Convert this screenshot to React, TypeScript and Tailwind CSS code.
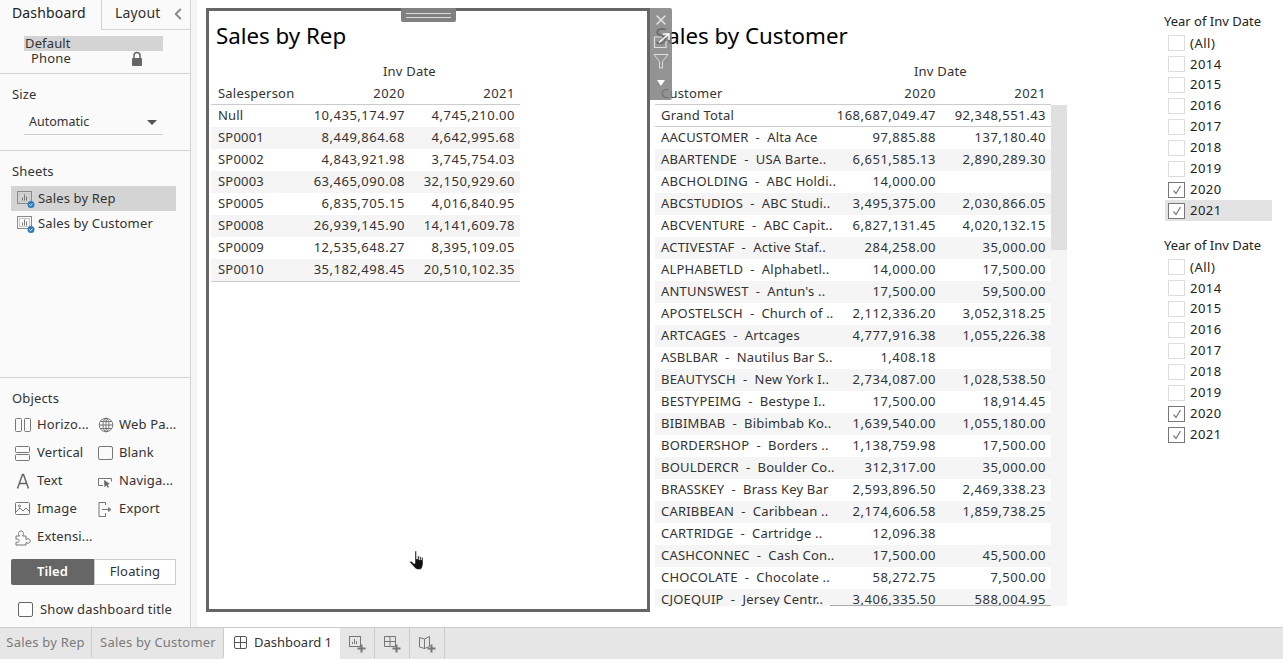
import { ChevronLeft, X } from "lucide-react";

const repRows = [
    ["Null", "10,435,174.97", "4,745,210.00"],
    ["SP0001", "8,449,864.68", "4,642,995.68"],
    ["SP0002", "4,843,921.98", "3,745,754.03"],
    ["SP0003", "63,465,090.08", "32,150,929.60"],
    ["SP0005", "6,835,705.15", "4,016,840.95"],
    ["SP0008", "26,939,145.90", "14,141,609.78"],
    ["SP0009", "12,535,648.27", "8,395,109.05"],
    ["SP0010", "35,182,498.45", "20,510,102.35"],
];

const customerRows = [
    ["AACUSTOMER  -  Alta Ace", "97,885.88", "137,180.40"],
    ["ABARTENDE  -  USA Barte..", "6,651,585.13", "2,890,289.30"],
    ["ABCHOLDING  -  ABC Holdi..", "14,000.00", ""],
    ["ABCSTUDIOS  -  ABC Studi..", "3,495,375.00", "2,030,866.05"],
    ["ABCVENTURE  -  ABC Capit..", "6,827,131.45", "4,020,132.15"],
    ["ACTIVESTAF  -  Active Staf..", "284,258.00", "35,000.00"],
    ["ALPHABETLD  -  Alphabetl..", "14,000.00", "17,500.00"],
    ["ANTUNSWEST  -  Antun's ..", "17,500.00", "59,500.00"],
    ["APOSTELSCH  -  Church of ..", "2,112,336.20", "3,052,318.25"],
    ["ARTCAGES  -  Artcages", "4,777,916.38", "1,055,226.38"],
    ["ASBLBAR  -  Nautilus Bar S..", "1,408.18", ""],
    ["BEAUTYSCH  -  New York I..", "2,734,087.00", "1,028,538.50"],
    ["BESTYPEIMG  -  Bestype I..", "17,500.00", "18,914.45"],
    ["BIBIMBAB  -  Bibimbab Ko..", "1,639,540.00", "1,055,180.00"],
    ["BORDERSHOP  -  Borders ..", "1,138,759.98", "17,500.00"],
    ["BOULDERCR  -  Boulder Co..", "312,317.00", "35,000.00"],
    ["BRASSKEY  -  Brass Key Bar", "2,593,896.50", "2,469,338.23"],
    ["CARIBBEAN  -  Caribbean ..", "2,174,606.58", "1,859,738.25"],
    ["CARTRIDGE  -  Cartridge ..", "12,096.38", ""],
    ["CASHCONNEC  -  Cash Con..", "17,500.00", "45,500.00"],
    ["CHOCOLATE  -  Chocolate ..", "58,272.75", "7,500.00"],
    ["CJOEQUIP  -  Jersey Centr..", "3,406,335.50", "588,004.95"],
];

const years = [
    { label: "(All)", checked: false },
    { label: "2014", checked: false },
    { label: "2015", checked: false },
    { label: "2016", checked: false },
    { label: "2017", checked: false },
    { label: "2018", checked: false },
    { label: "2019", checked: false },
    { label: "2020", checked: true },
    { label: "2021", checked: true },
];

const SheetIcon = () => (
    <svg width="18" height="18" viewBox="0 0 18 18" className="shrink-0">
        <rect x="0.5" y="1.5" width="14" height="12" fill="none" stroke="#8a8a8a" strokeWidth="1" />
        <rect x="2.5" y="3.5" width="10" height="8" fill="none" stroke="#c8c8c8" strokeWidth="1" />
        <path d="M5.5 10.500V7.500M7.500 10.500V4.500M9.500 10.500V6.500" stroke="#777" strokeWidth="1" />
        <circle cx="14" cy="14.500" r="3.500" fill="#2f7bbd" />
        <path d="M12.300 14.500l1.200 1.200 2-2" stroke="#fff" strokeWidth="1" fill="none" />
    </svg>
);

const LockIcon = () => (
    <svg width="12" height="16" viewBox="0 0 12 16" className="shrink-0">
        <path d="M3 7V4.500a3 3 0 0 1 6 0V7" fill="none" stroke="#666" strokeWidth="1.500" />
        <rect x="1" y="7" width="10" height="8" rx="1" fill="#666" />
    </svg>
);

const ObjectIcon = ({ name }: { name: string }) => {
    const c = { fill: "none", stroke: "#777", strokeWidth: 1 };
    return (
        <svg width="18" height="18" viewBox="0 0 18 18" className="shrink-0">
            {name === "horizontal" && (
                <>
                    <rect x="1.500" y="2.500" width="6" height="13" rx="1" {...c} />
                    <rect x="10.500" y="2.500" width="6" height="13" rx="1" {...c} />
                </>
            )}
            {name === "vertical" && (
                <>
                    <rect x="1.500" y="2.500" width="14" height="6" rx="1" {...c} />
                    <rect x="1.500" y="10.500" width="14" height="6" rx="1" {...c} />
                </>
            )}
            {name === "globe" && (
                <>
                    <circle cx="10" cy="9" r="6.800" {...c} />
                    <ellipse cx="10" cy="9" rx="3" ry="6.800" {...c} />
                    <path d="M3.200 9h13.600M4.200 5.500h11.600M4.200 12.500h11.600M10 2.200v13.600" {...c} />
                </>
            )}
            {name === "text" && <path d="M3.500 16.500L8.500 2.500h1l5 14M5.500 11.500h7" fill="none" stroke="#666" strokeWidth="1.500" />}
            {name === "image" && (
                <>
                    <rect x="1.500" y="2.500" width="14" height="12" rx="1" {...c} />
                    <path d="M2 12l4-4 3 3 3-3 3 3" {...c} />
                    <circle cx="5.500" cy="6" r="1" {...c} />
                </>
            )}
            {name === "extension" && (
                <path
                    d="M2 8h3.500c-.8-.8-1-1.800-1-2.500 0-1.500 1-2.500 2.500-2.500s2.500 1 2.500 2.500c0 .7-.3 1.700-1 2.500H12v3.500c.5-.5 1.200-.7 2-.7 1.300 0 2.300 1 2.300 2.200s-1 2.200-2.300 2.200c-.8 0-1.500-.2-2-.7V17H2v-3c.5.3 1 .4 1.500.4 1 0 1.700-.7 1.700-1.700S4.500 11 3.500 11c-.5 0-1 .1-1.500.4z"
                    {...c}
                />
            )}
            {name === "blank" && <rect x="2.500" y="2.500" width="14" height="13" rx="1.500" {...c} />}
            {name === "navigation" && (
                <>
                    <path d="M7 13.500H2.500v-7h13v3" {...c} />
                    <path d="M8 8l6 4-2.500.7 1.500 2.300-1.300.8-1.400-2.300-1.800 1.800z" fill="#666" />
                </>
            )}
            {name === "export" && (
                <>
                    <path d="M9.500 5V2.500h-6.500v14h6.500V13" {...c} />
                    <path d="M6 9.500h9M12.500 7.500l2.500 2-2.500 2z" {...c} />
                </>
            )}
        </svg>
    );
};

const ObjectItem = ({ icon, label }: { icon: string; label: string }) => (
    <div className="flex h-7 items-center gap-[5px] pl-[3px]">
        <ObjectIcon name={icon} />
        <span className="whitespace-nowrap">{label}</span>
    </div>
);

const Sidebar = () => (
    <div className="flex h-full w-[191px] shrink-0 flex-col border-r border-[#d4d4d4] bg-[#fafafa] text-[13px] tracking-[0.15px] text-[#333]">
        <div className="flex h-[30px] shrink-0 text-[14px]">
            <div className="w-[101px] pl-3 pt-[2px] text-[#222]">Dashboard</div>
            <div className="flex flex-1 border-b border-l border-[#d4d4d4] pt-[2px]">
                <span className="pl-[13px]">Layout</span>
                <ChevronLeft size={18} strokeWidth={2.500} className="ml-[9px] mt-[3px] text-[#888]" />
            </div>
        </div>
        <div className="h-[44px] shrink-0 border-b border-[#d4d4d4] pt-[6px]">
            <div className="ml-6 h-[15px] w-[139px] bg-[#d4d4d4] pl-[1px] leading-[15px]">Default</div>
            <div className="flex h-[15px] items-center pl-[31px] leading-[15px]">
                <span className="w-[100px]">Phone</span>
                <LockIcon />
            </div>
        </div>
        <div className="h-[77px] shrink-0 border-b border-[#d4d4d4] px-3 pt-[11px]">
            <div className="leading-[18px]">Size</div>
            <div className="ml-3 mt-[8px] flex h-[24px] w-[139px] items-center justify-between border-b border-[#ccc] pl-[5px] pr-[6px] text-[12.500px] tracking-normal">
                <span className="-mt-[1px]">Automatic</span>
                <span className="h-0 w-0 border-x-[5px] border-t-[5px] border-x-transparent border-t-[#555]" />
            </div>
        </div>
        <div className="flex-1 px-[11px] pt-[11px]">
            <div className="pl-[1px] leading-[18px]">Sheets</div>
            <div className="mt-[6px] flex h-[25px] w-[165px] items-center gap-[3px] bg-[#d4d4d4] pl-[6px]">
                <SheetIcon />
                <span>Sales by Rep</span>
            </div>
            <div className="flex h-[25px] w-[165px] items-center gap-[3px] pl-[6px]">
                <SheetIcon />
                <span>Sales by Customer</span>
            </div>
        </div>
        <div className="h-[250px] shrink-0 border-t border-[#d4d4d4] px-[11px] pt-[11px]">
            <div className="pl-[1px] leading-[18px]">Objects</div>
            <div className="mt-[4px] grid grid-cols-[82px_1fr]">
                <ObjectItem icon="horizontal" label="Horizo..." />
                <ObjectItem icon="globe" label="Web Pa..." />
                <ObjectItem icon="vertical" label="Vertical" />
                <ObjectItem icon="blank" label="Blank" />
                <ObjectItem icon="text" label="Text" />
                <ObjectItem icon="navigation" label="Naviga..." />
                <ObjectItem icon="image" label="Image" />
                <ObjectItem icon="export" label="Export" />
                <ObjectItem icon="extension" label="Extensi..." />
            </div>
            <div className="mt-2 flex h-[26px] w-[165px]">
                <div className="flex w-[83px] items-center justify-center rounded-l-[2px] bg-[#666] font-semibold text-white">Tiled</div>
                <div className="flex flex-1 items-center justify-center border border-[#ccc] bg-white">Floating</div>
            </div>
            <div className="mt-[15px] flex items-center gap-[7px] pl-[7px]">
                <span className="h-[15px] w-[15px] rounded-[2px] border border-[#666] bg-white" />
                <span>Show dashboard title</span>
            </div>
        </div>
    </div>
);

const RepSheet = () => (
    <div className="relative h-[604px] w-[444px] shrink-0 border-[3px] border-[#666] pl-[2px] pt-[10px]">
        <div className="pl-[5px] text-[22.300px] leading-[30px] text-black">Sales by Rep</div>
        <div className="mt-[10px] w-[309px] text-[13px] tracking-[0.2px] text-[#333]">
            <div className="h-[20px] pl-[172px] leading-[20px]">Inv Date</div>
            <div className="flex h-[24px] items-center border-b border-[#ccc] pt-[2px]">
                <span className="w-[84px] pl-[7px]">Salesperson</span>
                <span className="w-[110px] text-right tracking-[0.5px]">2020</span>
                <span className="w-[110px] text-right tracking-[0.5px]">2021</span>
            </div>
            <div className="border-b border-[#ccc]">
                {repRows.map((row) => (
                    <div key={row[0]} className="flex h-[22px] items-center odd:bg-white even:bg-[#f5f5f5]">
                        <span className="w-[84px] pl-[7px]">{row[0]}</span>
                        <span className="w-[110px] text-right tracking-[0.5px]">{row[1]}</span>
                        <span className="w-[110px] text-right tracking-[0.5px]">{row[2]}</span>
                    </div>
                ))}
            </div>
        </div>
        <div className="absolute left-[192px] top-[-3px] flex h-[14px] w-[55px] items-center justify-center rounded-b-[2px] bg-[#808080]">
            <span className="h-[5px] w-[45px] border-y border-[#ddd]" />
        </div>
    </div>
);

const CustomerSheet = () => (
    <div className="h-[606px] w-[417px] shrink-0 pl-[5px] pt-[13px]">
        <div className="text-[22.300px] leading-[30px] text-black">Sales by Customer</div>
        <div className="mt-[10px] w-[412px] text-[13px] tracking-[0.2px] text-[#333]">
            <div className="h-[20px] pl-[259px] leading-[20px]">Inv Date</div>
            <div className="flex h-[24px] w-[396px] items-center border-b border-[#ccc] pt-[2px]">
                <span className="w-[171px] pl-[6px]">Customer</span>
                <span className="w-[110px] text-right tracking-[0.5px]">2020</span>
                <span className="w-[110px] text-right tracking-[0.5px]">2021</span>
            </div>
            <div className="flex h-[501px]">
                <div className="relative h-[501px] w-[396px] overflow-hidden">
                    <div className="flex h-[22px] items-center border-b border-[#ccc]">
                        <span className="w-[171px] pl-[6px]">Grand Total</span>
                        <span className="w-[110px] text-right tracking-[0.5px]">168,687,049.47</span>
                        <span className="w-[110px] text-right tracking-[0.5px]">92,348,551.43</span>
                    </div>
                    {customerRows.map((row) => (
                        <div key={row[0]} className="flex h-[22px] items-center odd:bg-[#f5f5f5] even:bg-white">
                            <span className="w-[171px] whitespace-pre pl-[6px]">{row[0]}</span>
                            <span className="w-[110px] text-right tracking-[0.5px]">{row[1]}</span>
                            <span className="w-[110px] text-right tracking-[0.5px]">{row[2]}</span>
                        </div>
                    ))}
                    <div className="absolute bottom-0 left-[175px] right-0 h-px bg-[#aaa]" />
                </div>
                <div className="h-[501px] w-[16px] bg-[#f5f5f5]">
                    <div className="h-[145px] bg-[#e0e0e0]" />
                </div>
            </div>
        </div>
    </div>
);

const YearFilter = ({ hot }: { hot?: boolean }) => (
    <div className="w-[107px] text-[13px] text-[#222]">
        <div className="-ml-[1px] h-[22px] whitespace-nowrap leading-[20px]">Year of Inv Date</div>
        {years.map((year) => (
            <div
                key={year.label}
                className={`flex h-[20.900px] items-center gap-[5px] pl-[3px] tracking-[0.5px] ${hot && year.label === "2021" ? "bg-[#e3e3e3]" : ""}`}
            >
                <span
                    className={`flex h-[16px] w-[17px] items-center justify-center border bg-white ${year.checked ? "border-[#777]" : "border-[#ddd]"}`}
                >
                    {year.checked && (
                        <svg width="12" height="12" viewBox="0 0 12 12">
                            <path d="M2.500 6.500l2.500 3 4.500-7.500" fill="none" stroke="#777" strokeWidth="1.200" />
                        </svg>
                    )}
                </span>
                <span>{year.label}</span>
            </div>
        ))}
    </div>
);

const FloatToolbar = () => (
    <div className="absolute left-[453px] top-[8px] flex h-[92px] w-[22px] flex-col items-center rounded-r-[2px] bg-[#808080]/85 pt-[4px] text-[#e5e5e5]">
        <X size={16} strokeWidth={2} />
        <svg width="17" height="16" viewBox="0 0 17 16" className="mt-[5px]">
            <path d="M9 4H1.500v10.500H13V8" fill="none" stroke="#ddd" strokeWidth="1.200" />
            <path d="M6 9.500l9-8M10 1H16V7" fill="none" stroke="#fff" strokeWidth="1.400" />
        </svg>
        <svg width="16" height="16" viewBox="0 0 16 16" className="mt-[4px]">
            <path d="M1 1.500h14L9.500 8.500V15h-3V8.500z" fill="none" stroke="#ddd" strokeWidth="1" />
        </svg>
        <span className="mt-[11px] h-0 w-0 border-x-[4px] border-t-[6px] border-x-transparent border-t-white" />
    </div>
);

const HandCursor = () => (
    <svg width="16" height="22" viewBox="0 0 16 22" className="absolute left-[212px] top-[550px]">
        <path
            d="M6 1h1.500v8h1V6h1.500v4h.5V6.500H12V10h.5V7.500H14v7l-1 3.500c-1 2-5 2-6.500.5L.5 12l1.500-1 3 2.500h1z"
            fill="#111"
            stroke="#fff"
            strokeWidth=".5"
        />
    </svg>
);

const TabBar = () => (
    <div className="flex h-[32px] shrink-0 border-t border-[#ccc] bg-[#e6e6e6] pb-[2px] text-[13px] tracking-[0.2px] text-[#7a7a7a]">
        <div className="flex w-[92px] items-center justify-center border-r border-[#ccc]">Sales by Rep</div>
        <div className="flex w-[132px] items-center justify-center border-r border-[#ccc] pl-[1px]">Sales by Customer</div>
        <div className="-mb-[2px] flex w-[116px] items-center justify-center gap-[6px] bg-white pb-[2px] pl-[1px] tracking-normal text-[#333]">
            <svg width="15" height="15" viewBox="0 0 15 15">
                <rect x="1.500" y="1.500" width="12" height="12" rx="1.500" fill="none" stroke="#555" />
                <path d="M7.500 1.500v12M1.500 7.500h12" stroke="#555" />
            </svg>
            <span>Dashboard 1</span>
        </div>
        {["sheet", "dash", "story"].map((name) => (
            <div key={name} className="-mb-[2px] flex w-[35px] items-center justify-center border-r border-[#ccc]">
                <svg width="20" height="20" viewBox="0 0 20 20">
                    {name === "sheet" && (
                        <>
                            <rect x="2.500" y="2.500" width="11" height="10" fill="none" stroke="#777" />
                            <path d="M5.500 10V8M7.500 10V5M9.500 10V7" stroke="#777" />
                        </>
                    )}
                    {name === "dash" && (
                        <path d="M2.500 2.500h11v10h-11zM8 2.500v10M2.500 7.500h11" fill="none" stroke="#777" />
                    )}
                    {name === "story" && <path d="M2.500 3.500l5 1.500 5-2.500v10l-5 2-5-1.500zM7.500 5v10" fill="none" stroke="#777" />}
                    <path d="M14.500 10.500v8M10.500 14.500h8" stroke="#777" strokeWidth="2" />
                </svg>
            </div>
        ))}
    </div>
);

export default function App() {
    return (
        <div className="flex h-[659px] w-[1283px] flex-col overflow-hidden bg-white font-['Noto_Sans',sans-serif]">
            <div className="flex min-h-0 flex-1">
                <Sidebar />
                <div className="w-[6px] shrink-0 bg-[#f5f5f5]" />
                <div className="relative flex flex-1 pl-[9px] pt-[8px]">
                    <RepSheet />
                    <CustomerSheet />
                    <div className="ml-[98px] flex flex-col gap-[14px] pt-[3px]">
                        <YearFilter hot />
                        <YearFilter />
                    </div>
                    <FloatToolbar />
                    <HandCursor />
                </div>
            </div>
            <TabBar />
        </div>
    );
}
